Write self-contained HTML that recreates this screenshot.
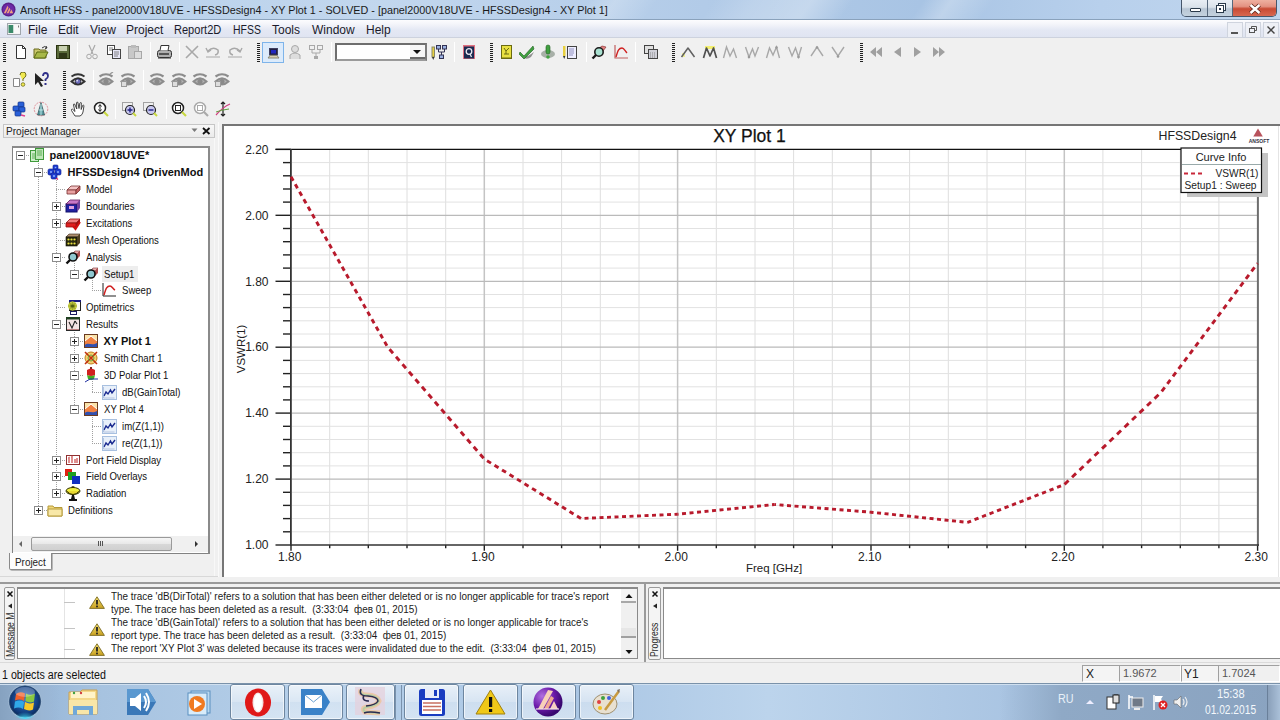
<!DOCTYPE html>
<html><head><meta charset="utf-8">
<style>
*{margin:0;padding:0;box-sizing:border-box}
html,body{width:1280px;height:720px;overflow:hidden;background:#f0f0f0;font-family:"Liberation Sans",sans-serif;color:#000;position:relative}
.a{position:absolute}
.grip{width:3px;height:19px;background:repeating-linear-gradient(#222 0 1px,transparent 1px 2px)}
.sep{width:1px;height:20px;background:#c8c8c8;border-right:1px solid #fff}
.tr{position:absolute;height:16px;line-height:16px;white-space:nowrap;font-size:11px;color:#111}
.tr.n{transform:scaleX(.87);transform-origin:0 50%}
.msg{position:absolute;font-size:11px;line-height:13px;color:#1a1a1a;white-space:nowrap;transform:scaleX(.9);transform-origin:0 50%}
.mi{position:absolute;top:21px;height:18px;line-height:18px;font-size:12px;color:#1b1b2b}
</style></head><body>
<!-- title bar -->
<div class="a" style="left:0;top:0;width:1280px;height:20px;background:linear-gradient(90deg,#b6cfea 0%,#c2d7ee 30%,#b2cbe8 55%,#a8c4e4 72%,#b8d0ec 86%,#c0d6ee 100%)"></div>
<div class="a" style="left:0;top:0;width:1280px;height:19px;overflow:hidden"><div class="a" style="left:0;top:-40px;width:1400px;height:100px;transform:skewX(-35deg);transform-origin:0 0;background:linear-gradient(90deg,rgba(255,255,255,0) 0,rgba(255,255,255,0) 44%,rgba(255,255,255,.22) 46%,rgba(255,255,255,0) 49%,rgba(255,255,255,0) 53%,rgba(255,255,255,.18) 56%,rgba(255,255,255,.3) 60%,rgba(255,255,255,0) 63%,rgba(255,255,255,0) 68%,rgba(255,255,255,.25) 70%,rgba(255,255,255,0) 73%,rgba(255,255,255,.0) 100%)"></div></div>
<div class="a" style="left:0;top:19px;width:1280px;height:1px;background:#8aa2bc"></div>
<svg class="a" style="left:1px;top:2px" width="15" height="15" viewBox="0 0 16 16"><circle cx="8" cy="8" r="7.5" fill="#5a1f8a"/><circle cx="8" cy="8" r="6" fill="#6c2aa6"/><path d="M3 12 L7 4 L8 6 L5 12Z M6 12 L9 6 L10 8 L8 12Z M9 12 L11 8 L13 12Z" fill="#f0a080"/></svg>
<div class="a" style="left:20px;top:2px;font-size:11px;line-height:16px;color:#1a1a1a;white-space:nowrap;transform:scaleX(.98);transform-origin:0 50%">Ansoft HFSS - panel2000V18UVE - HFSSDesign4 - XY Plot 1 - SOLVED - [panel2000V18UVE - HFSSDesign4 - XY Plot 1]</div>
<!-- caption buttons -->
<div class="a" style="left:1181px;top:0;width:96px;height:17px;border:1px solid #46566a;border-top:none;border-radius:0 0 5px 5px;overflow:hidden">
 <div class="a" style="left:0;top:0;width:26px;height:16px;background:linear-gradient(#e8eef4 0,#dae2ea 45%,#b8c6d4 55%,#c4d2de 100%);border-right:1px solid #56687c"></div>
 <div class="a" style="left:26px;top:0;width:25px;height:16px;background:linear-gradient(#e8eef4 0,#dae2ea 45%,#b8c6d4 55%,#c4d2de 100%);border-right:1px solid #56687c"></div>
 <div class="a" style="left:51px;top:0;width:45px;height:16px;background:linear-gradient(#eeb0a0 0,#e49282 40%,#c84a34 55%,#d86850 100%)"></div>
 <div class="a" style="left:8px;top:8px;width:11px;height:4px;background:#fff;border:1px solid #2a3a4a;border-radius:1px"></div>
 <svg class="a" style="left:33px;top:2px" width="12" height="12"><rect x="3.5" y="1.5" width="7" height="7" fill="#fff" stroke="#2a3a4a"/><rect x="1.5" y="3.5" width="7" height="7" fill="#fff" stroke="#2a3a4a"/><rect x="4" y="6" width="2" height="2" fill="#2a3a4a"/></svg>
 <svg class="a" style="left:66px;top:2.5px" width="14" height="12"><path d="M2.5 2 L11.5 10 M11.5 2 L2.5 10" stroke="#5a2418" stroke-width="4"/><path d="M2.5 2 L11.5 10 M11.5 2 L2.5 10" stroke="#fff" stroke-width="2.4"/></svg>
</div>
<!-- menu bar -->
<div class="a" style="left:0;top:20px;width:1280px;height:18px;background:linear-gradient(#fcfcfe 0,#f4f5fa 22%,#e4e8f4 55%,#dfe4f1 100%)"></div>
<div class="a" style="left:0;top:37px;width:1280px;height:1px;background:#cdd2de"></div>
<svg class="a" style="left:7px;top:22.5px" width="14" height="12" viewBox="0 0 14 12"><rect x=".5" y=".5" width="13" height="11" fill="#f4f4f4" stroke="#a0a6ac"/><rect x="1.5" y="2" width="5" height="8" fill="#3a8a6a"/><rect x="6.5" y="2" width="6" height="8" fill="#f8f8f8"/><path d="M11.5 2.5v2" stroke="#777"/></svg>
<div class="mi" style="left:28px">File</div>
<div class="mi" style="left:58px">Edit</div>
<div class="mi" style="left:90px">View</div>
<div class="mi" style="left:126px">Project</div>
<div class="mi" style="left:174px;transform:scaleX(.92);transform-origin:0 50%">Report2D</div>
<div class="mi" style="left:233px;transform:scaleX(.87);transform-origin:0 50%">HFSS</div>
<div class="mi" style="left:272px">Tools</div>
<div class="mi" style="left:312px">Window</div>
<div class="mi" style="left:366px">Help</div>
<!-- mdi buttons -->
<div class="a" style="left:1227px;top:22px;width:16px;height:16px;border:1px solid #cfd4de;background:#eef0f6"></div>
<div class="a" style="left:1231px;top:32px;width:7px;height:2px;background:#555"></div>
<div class="a" style="left:1245px;top:22px;width:16px;height:16px;border:1px solid #cfd4de;background:#eef0f6"></div>
<svg class="a" style="left:1248px;top:24px" width="10" height="10"><rect x="1.5" y="4.5" width="5" height="4" fill="none" stroke="#555"/><path d="M3.5 4.5v-2h5v4h-2" fill="none" stroke="#555"/></svg>
<div class="a" style="left:1263px;top:22px;width:16px;height:16px;border:1px solid #cfd4de;background:#eef0f6"></div>
<svg class="a" style="left:1266px;top:25px" width="10" height="10"><path d="M1.5 1.5 L8.5 8.5 M8.5 1.5 L1.5 8.5" stroke="#444" stroke-width="1.4"/></svg>

<!-- toolbars -->
<div class="a grip" style="left:3px;top:43px"></div>
<svg class="a" style="left:13px;top:44px" width="16" height="16" viewBox="0 0 16 16"><path d="M3.5 1.5h6l3 3v10h-9z" fill="#fff" stroke="#333"/><path d="M9.5 1.5v3h3" fill="none" stroke="#333"/></svg>
<svg class="a" style="left:33px;top:44px" width="16" height="16" viewBox="0 0 16 16"><path d="M1 5h5l1 1h6v8H1z" fill="#c9c76a" stroke="#6a6a20"/><path d="M1 14l3-6h11l-3 6z" fill="#a8b848" stroke="#5a6a10"/><path d="M9 4 Q12 1 14 4" stroke="#333" fill="none"/><path d="M13 2l1 2-2 .5" stroke="#333" fill="none"/></svg>
<svg class="a" style="left:55px;top:44px" width="16" height="16" viewBox="0 0 16 16"><rect x="1.5" y="1.5" width="13" height="13" fill="#5a6a3a" stroke="#2a3210"/><rect x="4" y="2" width="8" height="5" fill="#c8d0b0"/><rect x="4" y="9" width="8" height="5" fill="#303818"/></svg>
<div class="a sep" style="left:77px;top:42px"></div>
<svg class="a" style="left:84px;top:44px" width="16" height="16" viewBox="0 0 16 16"><path d="M5 1 L9 10 M11 1 L7 10" stroke="#a8a8a8" stroke-width="1.2" fill="none"/><circle cx="5" cy="12.5" r="2.3" fill="none" stroke="#a8a8a8"/><circle cx="11" cy="12.5" r="2.3" fill="none" stroke="#a8a8a8"/></svg>
<svg class="a" style="left:106px;top:44px" width="16" height="16" viewBox="0 0 16 16"><rect x="1.5" y="1.5" width="7" height="9" fill="#fff" stroke="#444"/><rect x="6.5" y="5.5" width="8" height="9" fill="#e8e8f8" stroke="#444"/><path d="M3 4h4M3 6h3M8 8h5M8 10h5M8 12h4" stroke="#666" stroke-width=".8"/></svg>
<svg class="a" style="left:127px;top:44px" width="16" height="16" viewBox="0 0 16 16"><rect x="1.5" y="2.5" width="10" height="12" fill="#c8c8c8" stroke="#a8a8a8"/><rect x="4" y="1" width="5" height="3" fill="#bbb"/><rect x="7.5" y="7.5" width="7" height="7" fill="#ddd" stroke="#a8a8a8"/></svg>
<div class="a sep" style="left:150px;top:42px"></div>
<svg class="a" style="left:156px;top:44px" width="16" height="16" viewBox="0 0 16 16"><rect x="1.5" y="6.5" width="14" height="7" rx="2" fill="#b0b0b0" stroke="#333"/><path d="M4 6.5 L5 1.5 H13 L12 6.5" fill="#fff" stroke="#333"/><rect x="3" y="9" width="10" height="2" fill="#555"/><path d="M2 14h13" stroke="#333"/></svg>
<div class="a sep" style="left:179px;top:42px"></div>
<svg class="a" style="left:184px;top:44px" width="16" height="16" viewBox="0 0 16 16"><path d="M2 2 L14 14 M14 2 L2 14" stroke="#a8a8a8" stroke-width="1.6"/></svg>
<svg class="a" style="left:205px;top:44px" width="16" height="16" viewBox="0 0 16 16"><path d="M3 7 Q8 2 13 6 Q14 10 10 11" stroke="#a8a8a8" stroke-width="1.5" fill="none"/><path d="M1 4 L3 8 L6 6" stroke="#a8a8a8" stroke-width="1.4" fill="none"/><path d="M1 13h14" stroke="#a8a8a8"/></svg>
<svg class="a" style="left:227px;top:44px" width="16" height="16" viewBox="0 0 16 16"><path d="M13 7 Q8 2 3 6 Q2 10 6 11" stroke="#a8a8a8" stroke-width="1.5" fill="none"/><path d="M15 4 L13 8 L10 6" stroke="#a8a8a8" stroke-width="1.4" fill="none"/><path d="M1 13h14" stroke="#a8a8a8"/></svg>
<div class="a grip" style="left:257px;top:43px"></div>
<div class="a" style="left:262px;top:42px;width:22px;height:21px;background:#dcebfb;border:1px solid #7eb4ea"></div>
<svg class="a" style="left:265px;top:45px" width="16" height="16" viewBox="0 0 16 16"><rect x="4.5" y="3.5" width="8" height="6.5" fill="#202040" stroke="#404060"/><rect x="6" y="5" width="5" height="3.5" fill="#2028c0"/><path d="M3 13 L5 10.5 H12 L14 13Z" fill="#d8d0b0" stroke="#887"/></svg>
<svg class="a" style="left:287px;top:44px" width="16" height="16" viewBox="0 0 16 16"><circle cx="8" cy="5" r="3.5" fill="#ddd" stroke="#a8a8a8"/><path d="M3 15 V11 Q8 7 13 11 V15" fill="#ddd" stroke="#a8a8a8"/></svg>
<svg class="a" style="left:308px;top:44px" width="16" height="16" viewBox="0 0 16 16"><rect x="1.5" y="1.5" width="5" height="4" fill="none" stroke="#a8a8a8"/><rect x="9.5" y="1.5" width="5" height="4" fill="none" stroke="#a8a8a8"/><path d="M4 6v3h8V6M8 9v3" stroke="#a8a8a8" fill="none"/><rect x="6" y="12" width="4" height="3" fill="#a8a8a8"/></svg>
<div class="a sep" style="left:331px;top:42px"></div>
<div class="a" style="left:335px;top:43px;width:92px;height:18px;background:#fff;border:2px solid #6e6e6e;border-right-color:#7a7a7a;border-bottom-color:#9a9a9a"></div>
<div class="a" style="left:410px;top:45px;width:15px;height:14px;background:#f6f6f6;border-bottom:2px solid #6a6a6a"></div>
<svg class="a" style="left:412px;top:49px" width="10" height="6"><path d="M1 1h8l-4 4z" fill="#111"/></svg>
<svg class="a" style="left:431px;top:44px" width="16" height="16" viewBox="0 0 16 16"><rect x="1" y="3" width="2.5" height="10" fill="#e8d040" stroke="#886"/><path d="M1 13l1.2 3 1.2-3" fill="#333"/><rect x="5.5" y="1.5" width="4" height="3.5" fill="#9ab0e0" stroke="#335"/><rect x="11.5" y="1.5" width="4" height="3.5" fill="#9ab0e0" stroke="#335"/><path d="M7.5 5v3h6V5M10.5 8v3" stroke="#335" fill="none"/><rect x="8.5" y="11" width="4" height="3.5" fill="#9ab0e0" stroke="#335"/></svg>
<div class="a sep" style="left:454px;top:42px"></div>
<svg class="a" style="left:461px;top:44px" width="16" height="16" viewBox="0 0 16 16"><rect x="2" y="1" width="12" height="14" fill="#e07080"/><rect x="3" y="2.5" width="10" height="12" fill="#1a2a50"/><circle cx="8" cy="7.5" r="2.8" fill="none" stroke="#e8e8f0" stroke-width="1.3"/><path d="M9 10 L10.5 13" stroke="#e8e8f0" stroke-width="1.2"/></svg>
<div class="a grip" style="left:490px;top:43px"></div>
<svg class="a" style="left:498px;top:44px" width="16" height="16" viewBox="0 0 16 16"><rect x="3.5" y="1.5" width="10" height="13" fill="#e8e040" stroke="#6a6a10"/><path d="M6 4 L8 7 L11 4 M8 7v3 M6 10h5" stroke="#6a6a10" fill="none"/><path d="M3 14h10" stroke="#6a6a10"/></svg>
<svg class="a" style="left:519px;top:44px" width="16" height="16" viewBox="0 0 16 16"><path d="M2 12 Q6 15 15 8 L12 13 Q7 17 2 12Z" fill="#909090"/><path d="M1 8 L5 12 L14 2 L15 5 L5 15 L0 10Z" fill="#40a040" stroke="#206020" stroke-width=".6"/></svg>
<svg class="a" style="left:540px;top:44px" width="16" height="16" viewBox="0 0 16 16"><ellipse cx="8" cy="10" rx="7" ry="4" fill="#a8b0a8"/><rect x="6" y="1" width="4" height="9" rx="2" fill="#40a040" stroke="#206020" stroke-width=".6"/><circle cx="8" cy="13" r="1.8" fill="#40a040"/></svg>
<svg class="a" style="left:562px;top:44px" width="16" height="16" viewBox="0 0 16 16"><rect x="5.5" y="2.5" width="9" height="12" fill="#eef" stroke="#444"/><path d="M7 5h5M7 7h5M7 9h5M7 11h4" stroke="#7a7ab0" stroke-width=".8"/><rect x="1" y="2" width="2.5" height="10" fill="#e8d040"/><path d="M1 12l1.2 3 1.2-3" fill="#333"/></svg>
<div class="a sep" style="left:586px;top:42px"></div>
<svg class="a" style="left:591px;top:44px" width="16" height="16" viewBox="0 0 16 16"><path d="M7 5 L11 2 L15 3 L12 7Z" fill="#e08080" stroke="#802020" stroke-width=".6"/><circle cx="8" cy="8" r="4.2" fill="#a8e0d0" stroke="#1a1a1a" stroke-width="1.6"/><path d="M5 11 L1.5 14.5" stroke="#1a1a1a" stroke-width="2.4"/></svg>
<svg class="a" style="left:613px;top:44px" width="16" height="16" viewBox="0 0 16 16"><path d="M2 1 V14 H15" stroke="#c06060" stroke-width="1.2" fill="none"/><path d="M3 13 C5 6 6 4 9 4 C11 4 12 7 14 9" stroke="#d02020" stroke-width="1.4" fill="none"/></svg>
<div class="a sep" style="left:635px;top:42px"></div>
<svg class="a" style="left:643px;top:44px" width="16" height="16" viewBox="0 0 16 16"><rect x="1.5" y="1.5" width="9" height="8" fill="#e0e0e0" stroke="#444"/><rect x="5.5" y="5.5" width="9" height="9" fill="#d0d0d8" stroke="#444"/><path d="M7 9h6M7 11h6M7 13h6" stroke="#777" stroke-width=".8" stroke-dasharray="1 1"/></svg>
<div class="a grip" style="left:672px;top:43px"></div>
<svg class="a" style="left:680px;top:44px" width="16" height="16" viewBox="0 0 16 16"><path d="M2 9h3v4H2z" fill="#f0f080" opacity=".8"/><path d="M1.5 13 L8 4 L14.5 13" stroke="#606060" stroke-width="1.5" fill="none" stroke-linejoin="round"/></svg>
<svg class="a" style="left:702px;top:44px" width="16" height="16" viewBox="0 0 16 16"><path d="M3 2h10v3H3z" fill="#f4f070"/><path d="M1.5 14 L4.5 4 L8 12 L11.5 4 L14.5 14" stroke="#505050" stroke-width="1.7" fill="none" stroke-linejoin="round"/></svg>
<svg class="a" style="left:722px;top:44px" width="16" height="16" viewBox="0 0 16 16"><path d="M1.5 14 L4.5 3 L8 12 L11.5 5 L14.5 14" stroke="#a8a8a8" stroke-width="1.4" fill="none"/></svg>
<svg class="a" style="left:744px;top:44px" width="16" height="16" viewBox="0 0 16 16"><path d="M1.5 3 L5 13 L8.5 5 L11 12 L14.5 3" stroke="#a8a8a8" stroke-width="1.4" fill="none"/><circle cx="5" cy="13" r="1.3" fill="#999"/></svg>
<svg class="a" style="left:765px;top:44px" width="16" height="16" viewBox="0 0 16 16"><path d="M1.5 14 L4.5 4 L8 11 L11.5 3 L14.5 14" stroke="#a8a8a8" stroke-width="1.4" fill="none"/><circle cx="11.5" cy="3.5" r="1.3" fill="#999"/></svg>
<svg class="a" style="left:787px;top:44px" width="16" height="16" viewBox="0 0 16 16"><path d="M1.5 3 L5 12 L8.5 4 L11.5 13 L14.5 3" stroke="#a8a8a8" stroke-width="1.4" fill="none"/><circle cx="11.5" cy="13" r="1.3" fill="#999"/></svg>
<svg class="a" style="left:809px;top:44px" width="16" height="16" viewBox="0 0 16 16"><path d="M2 12 L8 3 L14 12" stroke="#a8a8a8" stroke-width="1.4" fill="none"/><circle cx="8" cy="3.5" r="1.3" fill="#999"/></svg>
<svg class="a" style="left:830px;top:44px" width="16" height="16" viewBox="0 0 16 16"><path d="M2 3 L8 12 L14 3" stroke="#a8a8a8" stroke-width="1.4" fill="none"/><circle cx="8" cy="12.5" r="1.3" fill="#999"/></svg>
<div class="a grip" style="left:860px;top:43px"></div>
<svg class="a" style="left:868px;top:44px" width="16" height="16" viewBox="0 0 16 16"><path d="M8 3 L2 8 L8 13Z M14 3 L8 8 L14 13Z" fill="#a0a0a0"/></svg>
<svg class="a" style="left:889px;top:44px" width="16" height="16" viewBox="0 0 16 16"><path d="M12 3 L5 8 L12 13Z" fill="#a0a0a0"/></svg>
<svg class="a" style="left:910px;top:44px" width="16" height="16" viewBox="0 0 16 16"><path d="M4 3 L11 8 L4 13Z" fill="#a0a0a0"/></svg>
<svg class="a" style="left:931px;top:44px" width="16" height="16" viewBox="0 0 16 16"><path d="M2 3 L8 8 L2 13Z M8 3 L14 8 L8 13Z" fill="#a0a0a0"/></svg>
<div class="a grip" style="left:3px;top:71px"></div>
<svg class="a" style="left:11px;top:72px" width="16" height="16" viewBox="0 0 16 16"><path d="M2.5 6.5h6v8h-6z" fill="#fff" stroke="#888"/><path d="M9 3 Q9 0 12 0 Q15 0 15 3 Q15 5 12 7 V9" stroke="#707020" stroke-width="1" fill="#f0e850"/><circle cx="12" cy="12.5" r="1.8" fill="#f0e850" stroke="#707020" stroke-width=".8"/></svg>
<svg class="a" style="left:33px;top:72px" width="16" height="16" viewBox="0 0 16 16"><path d="M2 1 L2 13 L5 10 L8 15 L10 14 L7 9 L11 9Z" fill="#222"/><path d="M10 4 Q10 1 12.5 1 Q15 1 15 4 Q15 6 12.5 7.5 V9" stroke="#30308a" stroke-width="1.8" fill="none"/><rect x="11.5" y="11" width="2" height="2" fill="#30308a"/></svg>
<div class="a grip" style="left:63px;top:71px"></div>
<svg class="a" style="left:70px;top:72px" width="16" height="16" viewBox="0 0 16 16"><path d="M1.5 9.5 Q8 3 14.5 9.5 Q8 15.5 1.5 9.5Z" fill="#e8e8f0" stroke="#333" stroke-width="2"/><circle cx="8" cy="9.5" r="2.8" fill="#6a6ab8" stroke="#222" stroke-width=".8"/><circle cx="7.2" cy="8.7" r=".9" fill="#dde"/><path d="M1.5 4.5 Q8 0 14.5 4.5" stroke="#333" fill="none" stroke-width="1.8"/></svg>
<div class="a sep" style="left:93px;top:70px"></div>
<svg class="a" style="left:98px;top:72px" width="16" height="16" viewBox="0 0 16 16"><path d="M1.5 9.5 Q8 3 14.5 9.5 Q8 15.5 1.5 9.5Z" fill="#b4b4b4" stroke="#8c8c8c" stroke-width="2"/><circle cx="8" cy="9.5" r="2.6" fill="#8a8a8a"/><path d="M1.5 4.5 Q8 0 14.5 4.5" stroke="#8c8c8c" fill="none" stroke-width="2.2"/><path d="M12 2 L15 0" stroke="#999" stroke-width="1.4"/></svg>
<svg class="a" style="left:120px;top:72px" width="16" height="16" viewBox="0 0 16 16"><path d="M1.5 9.5 Q8 3 14.5 9.5 Q8 15.5 1.5 9.5Z" fill="#b4b4b4" stroke="#8c8c8c" stroke-width="2"/><circle cx="8" cy="9.5" r="2.6" fill="#8a8a8a"/><path d="M1.5 4.5 Q8 0 14.5 4.5" stroke="#8c8c8c" fill="none" stroke-width="2.2"/><rect x="1.5" y="9.5" width="5" height="5" fill="#ddd" stroke="#999"/></svg>
<div class="a sep" style="left:143px;top:70px"></div>
<svg class="a" style="left:149px;top:72px" width="16" height="16" viewBox="0 0 16 16"><path d="M1.5 9.5 Q8 3 14.5 9.5 Q8 15.5 1.5 9.5Z" fill="#b4b4b4" stroke="#8c8c8c" stroke-width="2"/><circle cx="8" cy="9.5" r="2.6" fill="#8a8a8a"/><path d="M1.5 4.5 Q8 0 14.5 4.5" stroke="#8c8c8c" fill="none" stroke-width="2.2"/></svg>
<svg class="a" style="left:171px;top:72px" width="16" height="16" viewBox="0 0 16 16"><path d="M1.5 9.5 Q8 3 14.5 9.5 Q8 15.5 1.5 9.5Z" fill="#b4b4b4" stroke="#8c8c8c" stroke-width="2"/><circle cx="8" cy="9.5" r="2.6" fill="#8a8a8a"/><path d="M1.5 4.5 Q8 0 14.5 4.5" stroke="#8c8c8c" fill="none" stroke-width="2.2"/><rect x="1.5" y="9.5" width="5" height="5" fill="#ddd" stroke="#999"/></svg>
<svg class="a" style="left:192px;top:72px" width="16" height="16" viewBox="0 0 16 16"><path d="M1.5 9.5 Q8 3 14.5 9.5 Q8 15.5 1.5 9.5Z" fill="#b4b4b4" stroke="#8c8c8c" stroke-width="2"/><circle cx="8" cy="9.5" r="2.6" fill="#8a8a8a"/><path d="M1.5 4.5 Q8 0 14.5 4.5" stroke="#8c8c8c" fill="none" stroke-width="2.2"/></svg>
<svg class="a" style="left:214px;top:72px" width="16" height="16" viewBox="0 0 16 16"><path d="M1.5 9.5 Q8 3 14.5 9.5 Q8 15.5 1.5 9.5Z" fill="#b4b4b4" stroke="#8c8c8c" stroke-width="2"/><circle cx="8" cy="9.5" r="2.6" fill="#8a8a8a"/><path d="M1.5 4.5 Q8 0 14.5 4.5" stroke="#8c8c8c" fill="none" stroke-width="2.2"/><rect x="1.5" y="9.5" width="5" height="5" fill="#ddd" stroke="#999"/></svg>
<div class="a grip" style="left:3px;top:99px"></div>
<svg class="a" style="left:11px;top:101px" width="16" height="16" viewBox="0 0 16 16"><g fill="#2a60d8" stroke="#10308a" stroke-width=".7"><rect x="7" y="1" width="6" height="5" rx="1"/><rect x="2" y="5" width="6" height="5" rx="1"/><rect x="8" y="6" width="6" height="5" rx="1"/><rect x="4" y="10" width="6" height="5" rx="1"/></g><path d="M10 14l4 1" stroke="#e04090" stroke-width="1.4"/></svg>
<svg class="a" style="left:33px;top:101px" width="16" height="16" viewBox="0 0 16 16"><circle cx="8" cy="8" r="6.8" fill="none" stroke="#e09098" stroke-dasharray="2 1"/><path d="M8 1.5 L4.5 14 H11.5Z" fill="#5a9aa0" stroke="#2a4a50" stroke-width=".7"/><path d="M8 3v11 M6 9h4" stroke="#c8f0f0" stroke-width=".9"/></svg>
<div class="a grip" style="left:63px;top:99px"></div>
<svg class="a" style="left:70px;top:101px" width="16" height="16" viewBox="0 0 16 16"><path d="M5 15 L1.5 9.5 Q1 8 2.5 8.2 L5 10.5 L3.5 4 Q3.3 2.8 4.6 3 L6.8 8 L6.5 2 Q6.6 .8 7.8 1.2 L9 7.5 L9.8 2.2 Q10.3 1.2 11.3 1.8 L11.2 8.5 L12.6 4.5 Q13.4 3.8 14 4.6 L13 11 Q12.5 14 10 15Z" fill="#fff" stroke="#333" stroke-width=".9"/></svg>
<svg class="a" style="left:93px;top:101px" width="16" height="16" viewBox="0 0 16 16"><circle cx="7" cy="7" r="5.5" fill="#fff" stroke="#222" stroke-width="1.5"/><path d="M7 4v6 M5.5 5.5 L7 3.5 L8.5 5.5 M5.5 8.5 L7 10.5 L8.5 8.5" stroke="#222" fill="none"/><path d="M11 11 L15 15" stroke="#c8d840" stroke-width="2.2"/></svg>
<div class="a sep" style="left:115px;top:99px"></div>
<svg class="a" style="left:121px;top:101px" width="16" height="16" viewBox="0 0 16 16"><rect x="1.5" y="1.5" width="10" height="8" fill="none" stroke="#555" stroke-dasharray="1 1"/><circle cx="9" cy="9" r="4.5" fill="#c8c8f0" stroke="#222" stroke-width="1.2"/><path d="M6.5 9h5M9 6.5v5" stroke="#202080" stroke-width="1.4"/><path d="M12 12 L15 15" stroke="#c8d840" stroke-width="2"/></svg>
<svg class="a" style="left:142px;top:101px" width="16" height="16" viewBox="0 0 16 16"><rect x="1.5" y="1.5" width="10" height="8" fill="none" stroke="#555" stroke-dasharray="1 1"/><circle cx="9" cy="9" r="4.5" fill="#c8c8f0" stroke="#222" stroke-width="1.2"/><path d="M6.5 9h5" stroke="#202080" stroke-width="1.4"/><path d="M12 12 L15 15" stroke="#c8d840" stroke-width="2"/></svg>
<div class="a sep" style="left:166px;top:99px"></div>
<svg class="a" style="left:171px;top:101px" width="16" height="16" viewBox="0 0 16 16"><circle cx="7" cy="7" r="5.5" fill="#fff" stroke="#222" stroke-width="1.5"/><rect x="4.5" y="4.5" width="5" height="5" fill="none" stroke="#222"/><path d="M11 11 L15 15" stroke="#c8d840" stroke-width="2.2"/></svg>
<svg class="a" style="left:193px;top:101px" width="16" height="16" viewBox="0 0 16 16"><circle cx="7" cy="7" r="5.5" fill="#fff" stroke="#aaa" stroke-width="1.5"/><rect x="4.5" y="4.5" width="5" height="5" fill="none" stroke="#aaa"/><path d="M11 11 L15 15" stroke="#aaa" stroke-width="2.2"/></svg>
<svg class="a" style="left:215px;top:101px" width="16" height="16" viewBox="0 0 16 16"><path d="M8 1v14 M6 3 L8 1 L10 3 M6 13 L8 15 L10 13" stroke="#222" stroke-width="1.2" fill="none"/><path d="M1 14 Q8 6 15 3" stroke="#d04080" stroke-width="1.2" fill="none"/><path d="M1 11 Q6 9 14 8" stroke="#60a040" stroke-width="1" fill="none"/></svg>

<!-- project manager -->
<div class="a" style="left:3px;top:124px;width:212px;height:14px;background:linear-gradient(#f7f7f7,#ebebeb);border:1px solid #c6c6c6"></div>
<div class="a" style="left:6px;top:124px;font-size:11px;line-height:14px;color:#222;transform:scaleX(.92);transform-origin:0 50%">Project Manager</div>
<svg class="a" style="left:191px;top:128px" width="8" height="5"><path d="M.5 .5h6l-3 3.5z" fill="#7a7a7a"/></svg>
<svg class="a" style="left:202px;top:127px" width="9" height="8"><path d="M1 1 L7.5 7 M7.5 1 L1 7" stroke="#111" stroke-width="1.8"/></svg>
<div class="a" style="left:214px;top:138px;width:1px;height:440px;background:#f8f8f8"></div>
<div class="a" style="left:12px;top:146px;width:198px;height:408px;background:#fff;border:1px solid #828282;border-top:2px solid #8a8a8a;border-right:2px solid #8a8a8a"></div>
<svg class="a" style="left:0;top:0" width="215" height="560"><g stroke="#a0a0a0" stroke-width="1" stroke-dasharray="1 1"><line x1="20.5" y1="159" x2="20.5" y2="161"/><line x1="38.5" y1="161" x2="38.5" y2="510"/><line x1="56.5" y1="178" x2="56.5" y2="493"/><line x1="74.5" y1="263" x2="74.5" y2="274"/><line x1="92.5" y1="280" x2="92.5" y2="290"/><line x1="74.5" y1="330" x2="74.5" y2="409"/><line x1="92.5" y1="381" x2="92.5" y2="392"/><line x1="92.5" y1="415" x2="92.5" y2="443"/><line x1="20" y1="155.5" x2="29" y2="155.5"/><line x1="38" y1="172.5" x2="47" y2="172.5"/><line x1="56" y1="189.5" x2="65" y2="189.5"/><line x1="56" y1="206.5" x2="65" y2="206.5"/><line x1="56" y1="223.5" x2="65" y2="223.5"/><line x1="56" y1="240.5" x2="65" y2="240.5"/><line x1="56" y1="257.5" x2="65" y2="257.5"/><line x1="74" y1="274.5" x2="83" y2="274.5"/><line x1="92" y1="290.5" x2="101" y2="290.5"/><line x1="56" y1="307.5" x2="65" y2="307.5"/><line x1="56" y1="324.5" x2="65" y2="324.5"/><line x1="74" y1="341.5" x2="83" y2="341.5"/><line x1="74" y1="358.5" x2="83" y2="358.5"/><line x1="74" y1="375.5" x2="83" y2="375.5"/><line x1="92" y1="392.5" x2="101" y2="392.5"/><line x1="74" y1="409.5" x2="83" y2="409.5"/><line x1="92" y1="426.5" x2="101" y2="426.5"/><line x1="92" y1="443.5" x2="101" y2="443.5"/><line x1="56" y1="460.5" x2="65" y2="460.5"/><line x1="56" y1="476.5" x2="65" y2="476.5"/><line x1="56" y1="493.5" x2="65" y2="493.5"/><line x1="38" y1="510.5" x2="47" y2="510.5"/></g>
<rect x="16.5" y="151.5" width="8" height="8" fill="#fff" stroke="#8c8c8c"/>
<path d="M18 155.5h5" stroke="#222"/>
<rect x="34.5" y="168.5" width="8" height="8" fill="#fff" stroke="#8c8c8c"/>
<path d="M36 172.5h5" stroke="#222"/>
<rect x="52.5" y="202.5" width="8" height="8" fill="#fff" stroke="#8c8c8c"/>
<path d="M54 206.5h5" stroke="#222"/>
<path d="M56.5 204v5" stroke="#222"/>
<rect x="52.5" y="219.5" width="8" height="8" fill="#fff" stroke="#8c8c8c"/>
<path d="M54 223.5h5" stroke="#222"/>
<path d="M56.5 221v5" stroke="#222"/>
<rect x="52.5" y="253.5" width="8" height="8" fill="#fff" stroke="#8c8c8c"/>
<path d="M54 257.5h5" stroke="#222"/>
<rect x="70.5" y="270.5" width="8" height="8" fill="#fff" stroke="#8c8c8c"/>
<path d="M72 274.5h5" stroke="#222"/>
<rect x="52.5" y="320.5" width="8" height="8" fill="#fff" stroke="#8c8c8c"/>
<path d="M54 324.5h5" stroke="#222"/>
<rect x="70.5" y="337.5" width="8" height="8" fill="#fff" stroke="#8c8c8c"/>
<path d="M72 341.5h5" stroke="#222"/>
<path d="M74.5 339v5" stroke="#222"/>
<rect x="70.5" y="354.5" width="8" height="8" fill="#fff" stroke="#8c8c8c"/>
<path d="M72 358.5h5" stroke="#222"/>
<path d="M74.5 356v5" stroke="#222"/>
<rect x="70.5" y="371.5" width="8" height="8" fill="#fff" stroke="#8c8c8c"/>
<path d="M72 375.5h5" stroke="#222"/>
<rect x="70.5" y="405.5" width="8" height="8" fill="#fff" stroke="#8c8c8c"/>
<path d="M72 409.5h5" stroke="#222"/>
<rect x="52.5" y="456.5" width="8" height="8" fill="#fff" stroke="#8c8c8c"/>
<path d="M54 460.5h5" stroke="#222"/>
<path d="M56.5 458v5" stroke="#222"/>
<rect x="52.5" y="472.5" width="8" height="8" fill="#fff" stroke="#8c8c8c"/>
<path d="M54 476.5h5" stroke="#222"/>
<path d="M56.5 474v5" stroke="#222"/>
<rect x="52.5" y="489.5" width="8" height="8" fill="#fff" stroke="#8c8c8c"/>
<path d="M54 493.5h5" stroke="#222"/>
<path d="M56.5 491v5" stroke="#222"/>
<rect x="34.5" y="506.5" width="8" height="8" fill="#fff" stroke="#8c8c8c"/>
<path d="M36 510.5h5" stroke="#222"/>
<path d="M38.5 508v5" stroke="#222"/>
</svg>
<svg class="a" style="left:29px;top:147px" width="16" height="16" viewBox="0 0 16 16"><rect x="1.5" y="3.5" width="8" height="11" fill="#cfeecb" stroke="#3f9a3a"/><rect x="6.5" y="1.5" width="8" height="11" fill="#bfe6b8" stroke="#3f9a3a"/><path d="M8 4h5M8 6h5M8 8h5M3 7h4M3 9h4M3 11h4" stroke="#5fae56" stroke-width="1"/></svg>
<div class="tr" style="left:49.5px;top:147px;font-weight:bold">panel2000V18UVE*</div>
<svg class="a" style="left:47px;top:164px" width="16" height="16" viewBox="0 0 16 16"><g fill="#1f3fd0" stroke="#0a1a8a" stroke-width=".6"><rect x="6" y="1" width="5" height="5" rx="1"/><rect x="1" y="5" width="6" height="6" rx="1.5"/><rect x="8" y="5" width="6" height="6" rx="1.5"/><rect x="4" y="9" width="6" height="6" rx="1.5"/></g><g fill="#8fb0ff"><circle cx="4" cy="8" r="1"/><circle cx="11" cy="8" r="1"/><circle cx="7" cy="12" r="1"/><circle cx="8.5" cy="3.5" r=".8"/></g><path d="M9 14l2 1.5" stroke="#d02060" stroke-width="1.2"/></svg>
<div class="tr" style="left:67.5px;top:164px;font-weight:bold">HFSSDesign4 (DrivenMod</div>
<svg class="a" style="left:65px;top:181px" width="16" height="16" viewBox="0 0 16 16"><path d="M2 9 L6 5 L15 5 L11 9 Z" fill="#f3c3c3" stroke="#7a3030" stroke-width=".8"/><path d="M2 9 L11 9 L11 13 L2 13 Z" fill="#e8a0a0" stroke="#7a3030" stroke-width=".8"/><path d="M11 9 L15 5 L15 9 L11 13 Z" fill="#c06060" stroke="#7a3030" stroke-width=".8"/></svg>
<div class="tr n" style="left:85.5px;top:181px">Model</div>
<svg class="a" style="left:65px;top:198px" width="16" height="16" viewBox="0 0 16 16"><rect x="1" y="6" width="11" height="8" fill="#2020a0" stroke="#10106a"/><path d="M1 6 L5 2 L15 2 L12 6Z" fill="#c878c8" stroke="#602060" stroke-width=".8"/><path d="M12 6 L15 2 L15 10 L12 14Z" fill="#7040a0"/><rect x="4" y="8" width="5" height="3" fill="#e0a0e0"/></svg>
<div class="tr n" style="left:85.5px;top:198px">Boundaries</div>
<svg class="a" style="left:65px;top:215px" width="16" height="16" viewBox="0 0 16 16"><path d="M1 8 L5 4 L15 4 L11 8 Z" fill="#f08080" stroke="#901010" stroke-width=".8"/><path d="M1 8 L11 8 L11 12 L1 12 Z" fill="#e02020" stroke="#901010" stroke-width=".8"/><path d="M11 8 L15 4 L15 8 L11 12Z" fill="#a01010"/><path d="M8 11 L10.5 14 L15 7" stroke="#d01010" stroke-width="2" fill="none"/></svg>
<div class="tr n" style="left:85.5px;top:215px">Excitations</div>
<svg class="a" style="left:65px;top:232px" width="16" height="16" viewBox="0 0 16 16"><path d="M1 5 L4 2 L15 2 L12 5Z" fill="#b09070" stroke="#302010" stroke-width=".6"/><rect x="1" y="5" width="11" height="9" fill="#2a2a10" stroke="#101000" stroke-width=".6"/><path d="M12 5 L15 2 L15 11 L12 14Z" fill="#504020"/><g fill="#e8e040"><circle cx="3.5" cy="7.5" r="1.1"/><circle cx="6.5" cy="7.5" r="1.1"/><circle cx="9.5" cy="7.5" r="1.1"/><circle cx="3.5" cy="11.5" r="1.1"/><circle cx="6.5" cy="11.5" r="1.1"/><circle cx="9.5" cy="11.5" r="1.1"/></g></svg>
<div class="tr n" style="left:85.5px;top:232px">Mesh Operations</div>
<svg class="a" style="left:65px;top:249px" width="16" height="16" viewBox="0 0 16 16"><path d="M7 5 L10 2 L15 2 L12 5Z" fill="#f0b0b0" stroke="#703030" stroke-width=".6"/><path d="M12 5 L15 2 L15 7 L12 10Z" fill="#b05050"/><circle cx="8" cy="8" r="4" fill="#90c8d0" stroke="#101010" stroke-width="1.6"/><path d="M5 11 L1.5 14.5" stroke="#101010" stroke-width="2.4"/></svg>
<div class="tr n" style="left:85.5px;top:249px">Analysis</div>
<svg class="a" style="left:83px;top:266px" width="16" height="16" viewBox="0 0 16 16"><path d="M7 5 L10 2 L15 2 L12 5Z" fill="#f0b0b0" stroke="#703030" stroke-width=".6"/><path d="M12 5 L15 2 L15 7 L12 10Z" fill="#b05050"/><circle cx="8" cy="8" r="4" fill="#90c8d0" stroke="#101010" stroke-width="1.6"/><path d="M5 11 L1.5 14.5" stroke="#101010" stroke-width="2.4"/></svg>
<div class="a" style="left:101.5px;top:266px;width:36px;height:16px;background:#eeeeee"></div>
<div class="tr n" style="left:103.5px;top:266px">Setup1</div>
<svg class="a" style="left:101px;top:282px" width="16" height="16" viewBox="0 0 16 16"><path d="M2 1 V14 H15" stroke="#202020" stroke-width="1" fill="none"/><path d="M3 13 C5 6 6 4 9 4 C11 4 12 7 14 8" stroke="#d02020" stroke-width="1.5" fill="none"/></svg>
<div class="tr n" style="left:121.5px;top:282px">Sweep</div>
<svg class="a" style="left:65px;top:299px" width="16" height="16" viewBox="0 0 16 16"><rect x="4.5" y="1.5" width="11" height="10" fill="#fbfbf0" stroke="#222"/><rect x="4" y="1" width="12" height="2" fill="#1a1a80"/><circle cx="7.5" cy="7" r="4.5" fill="#c8d040"/><circle cx="7.5" cy="7" r="2" fill="#f0f060" stroke="#606010"/><path d="M3 7h9M7.5 2.5v9M4.5 4l6 6M10.5 4l-6 6" stroke="#a0a830" stroke-width="1.2"/><circle cx="7.5" cy="7" r="1.6" fill="#506010"/><rect x="5.5" y="12.5" width="6" height="3" fill="#fff" stroke="#1a1a60"/></svg>
<div class="tr n" style="left:85.5px;top:299px">Optimetrics</div>
<svg class="a" style="left:65px;top:316px" width="16" height="16" viewBox="0 0 16 16"><rect x="1.5" y="1.5" width="13" height="13" fill="#f4e4e4" stroke="#2a2a2a"/><rect x="1" y="1" width="14" height="2.5" fill="#204020"/><path d="M4 6 L7 12 L10 5 M10 5 L12 8" stroke="#222" stroke-width="1.1" fill="none"/><path d="M2 13.5h12" stroke="#c08080"/></svg>
<div class="tr n" style="left:85.5px;top:316px">Results</div>
<svg class="a" style="left:83px;top:333px" width="16" height="16" viewBox="0 0 16 16"><rect x="1.5" y="1.5" width="13" height="13" fill="#fbe3a8" stroke="#6a3a20"/><path d="M2 8 L8 3 L14 8 V14 H2Z" fill="#f08040"/><path d="M2 12 C5 9 9 13 14 10 V14 H2Z" fill="#3050b0"/><path d="M2 8 L8 3 L14 8" stroke="#fff" fill="none"/></svg>
<div class="tr" style="left:103.5px;top:333px;font-weight:bold">XY Plot 1</div>
<svg class="a" style="left:83px;top:350px" width="16" height="16" viewBox="0 0 16 16"><circle cx="8" cy="8" r="6" fill="#f6d070" stroke="#c08020"/><path d="M2 2 L14 14 M14 2 L2 14" stroke="#c03010" stroke-width="1.6"/><circle cx="8" cy="8" r="3" fill="none" stroke="#70a040"/></svg>
<div class="tr n" style="left:103.5px;top:350px">Smith Chart 1</div>
<svg class="a" style="left:83px;top:367px" width="16" height="16" viewBox="0 0 16 16"><path d="M4 3 Q8 0 12 3 L12 8 Q8 10 4 8Z" fill="#d02020"/><path d="M4 8 Q8 10 12 8 L11 12 Q8 14 5 12Z" fill="#40b020"/><path d="M2 15 L7 12 M7 12 L15 12" stroke="#2030a0" stroke-width="1"/><rect x="7" y="0" width="2" height="2" fill="#802020"/></svg>
<div class="tr n" style="left:103.5px;top:367px">3D Polar Plot 1</div>
<svg class="a" style="left:101px;top:384px" width="16" height="16" viewBox="0 0 16 16"><rect x="1.5" y="1.5" width="14" height="14" fill="#e8f0fa" stroke="#a8c0e0"/><path d="M3 12 L5 8 L7 10 L9.5 6 L11 9 L14 5" stroke="#1a2a90" stroke-width="1.4" fill="none"/><path d="M2.5 3v11h11" stroke="#90a8d0" stroke-width=".6" fill="none"/></svg>
<div class="tr n" style="left:121.5px;top:384px">dB(GainTotal)</div>
<svg class="a" style="left:83px;top:401px" width="16" height="16" viewBox="0 0 16 16"><rect x="1.5" y="1.5" width="13" height="13" fill="#fbe3a8" stroke="#6a3a20"/><path d="M2 8 L8 3 L14 8 V14 H2Z" fill="#f08040"/><path d="M2 12 C5 9 9 13 14 10 V14 H2Z" fill="#3050b0"/><path d="M2 8 L8 3 L14 8" stroke="#fff" fill="none"/></svg>
<div class="tr n" style="left:103.5px;top:401px">XY Plot 4</div>
<svg class="a" style="left:101px;top:418px" width="16" height="16" viewBox="0 0 16 16"><rect x="1.5" y="1.5" width="14" height="14" fill="#e8f0fa" stroke="#a8c0e0"/><path d="M3 12 L5 8 L7 10 L9.5 6 L11 9 L14 5" stroke="#1a2a90" stroke-width="1.4" fill="none"/><path d="M2.5 3v11h11" stroke="#90a8d0" stroke-width=".6" fill="none"/></svg>
<div class="tr n" style="left:121.5px;top:418px">im(Z(1,1))</div>
<svg class="a" style="left:101px;top:435px" width="16" height="16" viewBox="0 0 16 16"><rect x="1.5" y="1.5" width="14" height="14" fill="#e8f0fa" stroke="#a8c0e0"/><path d="M3 12 L5 8 L7 10 L9.5 6 L11 9 L14 5" stroke="#1a2a90" stroke-width="1.4" fill="none"/><path d="M2.5 3v11h11" stroke="#90a8d0" stroke-width=".6" fill="none"/></svg>
<div class="tr n" style="left:121.5px;top:435px">re(Z(1,1))</div>
<svg class="a" style="left:65px;top:452px" width="16" height="16" viewBox="0 0 16 16"><rect x="1.5" y="3.5" width="13" height="9" fill="#fff" stroke="#903030"/><path d="M4 11 V6 M7 11 V5 M10 11 V7 M12 11 V6" stroke="#c02020" stroke-width="1"/><path d="M3 6 L5 5 M6 5 L8 4" stroke="#c04040" stroke-width=".8"/></svg>
<div class="tr n" style="left:85.5px;top:452px">Port Field Display</div>
<svg class="a" style="left:65px;top:468px" width="16" height="16" viewBox="0 0 16 16"><rect x="0" y="1" width="7" height="7" fill="#e02010"/><rect x="3" y="4" width="8" height="8" fill="#20a020"/><rect x="7" y="8" width="8" height="8" fill="#1030c0"/></svg>
<div class="tr n" style="left:85.5px;top:468px">Field Overlays</div>
<svg class="a" style="left:65px;top:485px" width="16" height="16" viewBox="0 0 16 16"><ellipse cx="8" cy="6" rx="7" ry="3.5" fill="#f0f040" stroke="#303000" stroke-width="1"/><path d="M1.5 6 Q8 13 14.5 6" fill="#e8d830" stroke="#303000"/><path d="M7 10 L6 14 H10 L9 10Z" fill="#101010"/><rect x="4" y="14" width="8" height="2" fill="#101010"/><path d="M7 1 L8 3 L9 1" stroke="#303000" fill="none"/></svg>
<div class="tr n" style="left:85.5px;top:485px">Radiation</div>
<svg class="a" style="left:47px;top:502px" width="16" height="16" viewBox="0 0 16 16"><path d="M1 4 H6 L7 5.5 H15 V14 H1Z" fill="#f1d77a" stroke="#b59a3a"/><path d="M1 7 H15 V14 H1Z" fill="#f8e8a8" stroke="#b59a3a"/></svg>
<div class="tr n" style="left:67.5px;top:502px">Definitions</div>
<!-- h scrollbar -->
<div class="a" style="left:13px;top:536px;width:195px;height:16px;background:#f0f0f0"></div>
<svg class="a" style="left:17px;top:540px" width="8" height="8"><path d="M5 1 L2 4 L5 7Z" fill="#666"/></svg>
<svg class="a" style="left:192px;top:540px" width="8" height="8"><path d="M3 1 L6 4 L3 7Z" fill="#333"/></svg>
<div class="a" style="left:31px;top:537px;width:141px;height:14px;border:1px solid #9a9a9a;border-radius:2px;background:linear-gradient(#f6f6f6 0,#e8e8e8 50%,#d8d8d8 51%,#d0d0d0 100%)"></div>
<div class="a" style="left:98px;top:541px;width:6px;height:5px;background:repeating-linear-gradient(90deg,#555 0 1px,transparent 1px 2px)"></div>
<!-- project tab -->
<div class="a" style="left:9px;top:553px;width:43px;height:17px;background:#fcfcfc;border:1px solid #8a8a8a;border-top:none;border-radius:0 0 2px 2px;box-shadow:1px 1px 0 #b8b8b8"></div>
<div class="a" style="left:15px;top:555px;font-size:11px;line-height:14px;color:#222;transform:scaleX(.9);transform-origin:0 50%">Project</div>
<div class="a" style="left:0;top:576px;width:222px;height:1px;background:#d8d8d8"></div>

<!-- plot window -->
<div class="a" style="left:218px;top:122px;width:4px;height:456px;background:#f0f0f0;border-left:1px solid #fafafa"></div>
<div class="a" style="left:222px;top:124px;width:1058px;height:453px;background:#fff;border-left:2px solid #767676;border-top:2px solid #767676"></div>
<div class="a" style="left:1278px;top:126px;width:1px;height:451px;background:#e4e4e4"></div>
<svg class="a" style="left:0;top:0" width="1280" height="600" font-family="Liberation Sans">
<line x1="329.7" y1="150" x2="329.7" y2="545" stroke="#dedede" stroke-width="1"/>
<line x1="368.3" y1="150" x2="368.3" y2="545" stroke="#dedede" stroke-width="1"/>
<line x1="407.0" y1="150" x2="407.0" y2="545" stroke="#dedede" stroke-width="1"/>
<line x1="445.7" y1="150" x2="445.7" y2="545" stroke="#dedede" stroke-width="1"/>
<line x1="523.0" y1="150" x2="523.0" y2="545" stroke="#dedede" stroke-width="1"/>
<line x1="561.6" y1="150" x2="561.6" y2="545" stroke="#dedede" stroke-width="1"/>
<line x1="600.3" y1="150" x2="600.3" y2="545" stroke="#dedede" stroke-width="1"/>
<line x1="639.0" y1="150" x2="639.0" y2="545" stroke="#dedede" stroke-width="1"/>
<line x1="716.3" y1="150" x2="716.3" y2="545" stroke="#dedede" stroke-width="1"/>
<line x1="755.0" y1="150" x2="755.0" y2="545" stroke="#dedede" stroke-width="1"/>
<line x1="793.6" y1="150" x2="793.6" y2="545" stroke="#dedede" stroke-width="1"/>
<line x1="832.3" y1="150" x2="832.3" y2="545" stroke="#dedede" stroke-width="1"/>
<line x1="909.6" y1="150" x2="909.6" y2="545" stroke="#dedede" stroke-width="1"/>
<line x1="948.3" y1="150" x2="948.3" y2="545" stroke="#dedede" stroke-width="1"/>
<line x1="987.0" y1="150" x2="987.0" y2="545" stroke="#dedede" stroke-width="1"/>
<line x1="1025.6" y1="150" x2="1025.6" y2="545" stroke="#dedede" stroke-width="1"/>
<line x1="1102.9" y1="150" x2="1102.9" y2="545" stroke="#dedede" stroke-width="1"/>
<line x1="1141.6" y1="150" x2="1141.6" y2="545" stroke="#dedede" stroke-width="1"/>
<line x1="1180.3" y1="150" x2="1180.3" y2="545" stroke="#dedede" stroke-width="1"/>
<line x1="1218.9" y1="150" x2="1218.9" y2="545" stroke="#dedede" stroke-width="1"/>
<line x1="292" y1="531.8" x2="1257" y2="531.8" stroke="#e2e2e2" stroke-width="1"/>
<line x1="292" y1="518.6" x2="1257" y2="518.6" stroke="#e2e2e2" stroke-width="1"/>
<line x1="292" y1="505.4" x2="1257" y2="505.4" stroke="#e2e2e2" stroke-width="1"/>
<line x1="292" y1="492.3" x2="1257" y2="492.3" stroke="#e2e2e2" stroke-width="1"/>
<line x1="292" y1="465.9" x2="1257" y2="465.9" stroke="#e2e2e2" stroke-width="1"/>
<line x1="292" y1="452.7" x2="1257" y2="452.7" stroke="#e2e2e2" stroke-width="1"/>
<line x1="292" y1="439.5" x2="1257" y2="439.5" stroke="#e2e2e2" stroke-width="1"/>
<line x1="292" y1="426.3" x2="1257" y2="426.3" stroke="#e2e2e2" stroke-width="1"/>
<line x1="292" y1="399.9" x2="1257" y2="399.9" stroke="#e2e2e2" stroke-width="1"/>
<line x1="292" y1="386.8" x2="1257" y2="386.8" stroke="#e2e2e2" stroke-width="1"/>
<line x1="292" y1="373.6" x2="1257" y2="373.6" stroke="#e2e2e2" stroke-width="1"/>
<line x1="292" y1="360.4" x2="1257" y2="360.4" stroke="#e2e2e2" stroke-width="1"/>
<line x1="292" y1="334.0" x2="1257" y2="334.0" stroke="#e2e2e2" stroke-width="1"/>
<line x1="292" y1="320.8" x2="1257" y2="320.8" stroke="#e2e2e2" stroke-width="1"/>
<line x1="292" y1="307.6" x2="1257" y2="307.6" stroke="#e2e2e2" stroke-width="1"/>
<line x1="292" y1="294.5" x2="1257" y2="294.5" stroke="#e2e2e2" stroke-width="1"/>
<line x1="292" y1="268.1" x2="1257" y2="268.1" stroke="#e2e2e2" stroke-width="1"/>
<line x1="292" y1="254.9" x2="1257" y2="254.9" stroke="#e2e2e2" stroke-width="1"/>
<line x1="292" y1="241.7" x2="1257" y2="241.7" stroke="#e2e2e2" stroke-width="1"/>
<line x1="292" y1="228.5" x2="1257" y2="228.5" stroke="#e2e2e2" stroke-width="1"/>
<line x1="292" y1="202.1" x2="1257" y2="202.1" stroke="#e2e2e2" stroke-width="1"/>
<line x1="292" y1="189.0" x2="1257" y2="189.0" stroke="#e2e2e2" stroke-width="1"/>
<line x1="292" y1="175.8" x2="1257" y2="175.8" stroke="#e2e2e2" stroke-width="1"/>
<line x1="292" y1="162.6" x2="1257" y2="162.6" stroke="#e2e2e2" stroke-width="1"/>
<line x1="484.3" y1="150" x2="484.3" y2="545" stroke="#c4c4c4" stroke-width="1.5"/>
<line x1="677.6" y1="150" x2="677.6" y2="545" stroke="#c4c4c4" stroke-width="1.5"/>
<line x1="871.0" y1="150" x2="871.0" y2="545" stroke="#c4c4c4" stroke-width="1.5"/>
<line x1="1064.3" y1="150" x2="1064.3" y2="545" stroke="#c4c4c4" stroke-width="1.5"/>
<line x1="292" y1="479.1" x2="1257" y2="479.1" stroke="#bababa" stroke-width="1.3"/>
<line x1="292" y1="413.1" x2="1257" y2="413.1" stroke="#bababa" stroke-width="1.3"/>
<line x1="292" y1="347.2" x2="1257" y2="347.2" stroke="#bababa" stroke-width="1.3"/>
<line x1="292" y1="281.3" x2="1257" y2="281.3" stroke="#bababa" stroke-width="1.3"/>
<line x1="292" y1="215.3" x2="1257" y2="215.3" stroke="#bababa" stroke-width="1.3"/>
<line x1="275.5" y1="545.0" x2="291" y2="545.0" stroke="#222" stroke-width="1.4"/>
<line x1="283" y1="531.8" x2="291" y2="531.8" stroke="#222" stroke-width="1.4"/>
<line x1="283" y1="518.6" x2="291" y2="518.6" stroke="#222" stroke-width="1.4"/>
<line x1="283" y1="505.4" x2="291" y2="505.4" stroke="#222" stroke-width="1.4"/>
<line x1="283" y1="492.3" x2="291" y2="492.3" stroke="#222" stroke-width="1.4"/>
<line x1="275.5" y1="479.1" x2="291" y2="479.1" stroke="#222" stroke-width="1.4"/>
<line x1="283" y1="465.9" x2="291" y2="465.9" stroke="#222" stroke-width="1.4"/>
<line x1="283" y1="452.7" x2="291" y2="452.7" stroke="#222" stroke-width="1.4"/>
<line x1="283" y1="439.5" x2="291" y2="439.5" stroke="#222" stroke-width="1.4"/>
<line x1="283" y1="426.3" x2="291" y2="426.3" stroke="#222" stroke-width="1.4"/>
<line x1="275.5" y1="413.1" x2="291" y2="413.1" stroke="#222" stroke-width="1.4"/>
<line x1="283" y1="399.9" x2="291" y2="399.9" stroke="#222" stroke-width="1.4"/>
<line x1="283" y1="386.8" x2="291" y2="386.8" stroke="#222" stroke-width="1.4"/>
<line x1="283" y1="373.6" x2="291" y2="373.6" stroke="#222" stroke-width="1.4"/>
<line x1="283" y1="360.4" x2="291" y2="360.4" stroke="#222" stroke-width="1.4"/>
<line x1="275.5" y1="347.2" x2="291" y2="347.2" stroke="#222" stroke-width="1.4"/>
<line x1="283" y1="334.0" x2="291" y2="334.0" stroke="#222" stroke-width="1.4"/>
<line x1="283" y1="320.8" x2="291" y2="320.8" stroke="#222" stroke-width="1.4"/>
<line x1="283" y1="307.6" x2="291" y2="307.6" stroke="#222" stroke-width="1.4"/>
<line x1="283" y1="294.5" x2="291" y2="294.5" stroke="#222" stroke-width="1.4"/>
<line x1="275.5" y1="281.3" x2="291" y2="281.3" stroke="#222" stroke-width="1.4"/>
<line x1="283" y1="268.1" x2="291" y2="268.1" stroke="#222" stroke-width="1.4"/>
<line x1="283" y1="254.9" x2="291" y2="254.9" stroke="#222" stroke-width="1.4"/>
<line x1="283" y1="241.7" x2="291" y2="241.7" stroke="#222" stroke-width="1.4"/>
<line x1="283" y1="228.5" x2="291" y2="228.5" stroke="#222" stroke-width="1.4"/>
<line x1="275.5" y1="215.3" x2="291" y2="215.3" stroke="#222" stroke-width="1.4"/>
<line x1="283" y1="202.1" x2="291" y2="202.1" stroke="#222" stroke-width="1.4"/>
<line x1="283" y1="189.0" x2="291" y2="189.0" stroke="#222" stroke-width="1.4"/>
<line x1="283" y1="175.8" x2="291" y2="175.8" stroke="#222" stroke-width="1.4"/>
<line x1="283" y1="162.6" x2="291" y2="162.6" stroke="#222" stroke-width="1.4"/>
<line x1="275.5" y1="149.4" x2="291" y2="149.4" stroke="#222" stroke-width="1.4"/>
<line x1="291.0" y1="545" x2="291.0" y2="550.8" stroke="#222" stroke-width="1.4"/>
<line x1="329.7" y1="545" x2="329.7" y2="548.2" stroke="#222" stroke-width="1.4"/>
<line x1="368.3" y1="545" x2="368.3" y2="548.2" stroke="#222" stroke-width="1.4"/>
<line x1="407.0" y1="545" x2="407.0" y2="548.2" stroke="#222" stroke-width="1.4"/>
<line x1="445.7" y1="545" x2="445.7" y2="548.2" stroke="#222" stroke-width="1.4"/>
<line x1="484.3" y1="545" x2="484.3" y2="550.8" stroke="#222" stroke-width="1.4"/>
<line x1="523.0" y1="545" x2="523.0" y2="548.2" stroke="#222" stroke-width="1.4"/>
<line x1="561.6" y1="545" x2="561.6" y2="548.2" stroke="#222" stroke-width="1.4"/>
<line x1="600.3" y1="545" x2="600.3" y2="548.2" stroke="#222" stroke-width="1.4"/>
<line x1="639.0" y1="545" x2="639.0" y2="548.2" stroke="#222" stroke-width="1.4"/>
<line x1="677.6" y1="545" x2="677.6" y2="550.8" stroke="#222" stroke-width="1.4"/>
<line x1="716.3" y1="545" x2="716.3" y2="548.2" stroke="#222" stroke-width="1.4"/>
<line x1="755.0" y1="545" x2="755.0" y2="548.2" stroke="#222" stroke-width="1.4"/>
<line x1="793.6" y1="545" x2="793.6" y2="548.2" stroke="#222" stroke-width="1.4"/>
<line x1="832.3" y1="545" x2="832.3" y2="548.2" stroke="#222" stroke-width="1.4"/>
<line x1="871.0" y1="545" x2="871.0" y2="550.8" stroke="#222" stroke-width="1.4"/>
<line x1="909.6" y1="545" x2="909.6" y2="548.2" stroke="#222" stroke-width="1.4"/>
<line x1="948.3" y1="545" x2="948.3" y2="548.2" stroke="#222" stroke-width="1.4"/>
<line x1="987.0" y1="545" x2="987.0" y2="548.2" stroke="#222" stroke-width="1.4"/>
<line x1="1025.6" y1="545" x2="1025.6" y2="548.2" stroke="#222" stroke-width="1.4"/>
<line x1="1064.3" y1="545" x2="1064.3" y2="550.8" stroke="#222" stroke-width="1.4"/>
<line x1="1102.9" y1="545" x2="1102.9" y2="548.2" stroke="#222" stroke-width="1.4"/>
<line x1="1141.6" y1="545" x2="1141.6" y2="548.2" stroke="#222" stroke-width="1.4"/>
<line x1="1180.3" y1="545" x2="1180.3" y2="548.2" stroke="#222" stroke-width="1.4"/>
<line x1="1218.9" y1="545" x2="1218.9" y2="548.2" stroke="#222" stroke-width="1.4"/>
<line x1="1257.6" y1="545" x2="1257.6" y2="550.8" stroke="#222" stroke-width="1.4"/>
<line x1="275.5" y1="149.4" x2="1258" y2="149.4" stroke="#111" stroke-width="1.4"/>
<line x1="290.9" y1="149" x2="290.9" y2="546" stroke="#333" stroke-width="1.8"/>
<line x1="1257.9" y1="149" x2="1257.9" y2="546" stroke="#6e6e6e" stroke-width="2"/>
<line x1="290" y1="545" x2="1259" y2="545" stroke="#333" stroke-width="1.6"/>
<text x="268.5" y="549.2" text-anchor="end" font-size="12" fill="#222">1.00</text>
<text x="268.5" y="483.3" text-anchor="end" font-size="12" fill="#222">1.20</text>
<text x="268.5" y="417.3" text-anchor="end" font-size="12" fill="#222">1.40</text>
<text x="268.5" y="351.4" text-anchor="end" font-size="12" fill="#222">1.60</text>
<text x="268.5" y="285.5" text-anchor="end" font-size="12" fill="#222">1.80</text>
<text x="268.5" y="219.5" text-anchor="end" font-size="12" fill="#222">2.00</text>
<text x="268.5" y="153.6" text-anchor="end" font-size="12" fill="#222">2.20</text>
<text x="289.7" y="561" text-anchor="middle" font-size="12" fill="#222">1.80</text>
<text x="483.0" y="561" text-anchor="middle" font-size="12" fill="#222">1.90</text>
<text x="676.3" y="561" text-anchor="middle" font-size="12" fill="#222">2.00</text>
<text x="869.7" y="561" text-anchor="middle" font-size="12" fill="#222">2.10</text>
<text x="1063.0" y="561" text-anchor="middle" font-size="12" fill="#222">2.20</text>
<text x="1256.3" y="561" text-anchor="middle" font-size="12" fill="#222">2.30</text>
<text x="774" y="572" text-anchor="middle" font-size="11.5" fill="#222">Freq [GHz]</text>
<text transform="translate(244.8,349) rotate(-90)" text-anchor="middle" font-size="11.5" fill="#222">VSWR(1)</text>
<text x="749.5" y="141.5" text-anchor="middle" font-size="17.5" fill="#111" stroke="#111" stroke-width=".25">XY Plot 1</text>
<text x="1197.5" y="140" text-anchor="middle" font-size="13" fill="#222" textLength="78" lengthAdjust="spacingAndGlyphs">HFSSDesign4</text>
<path d="M291.00,176.70 L387.66,347.00" fill="none" stroke="#b81a2c" stroke-width="2.9" stroke-dasharray="4.599 4.024" stroke-dashoffset="0.000"/>
<path d="M387.66,347.00 L484.32,459.00" fill="none" stroke="#b81a2c" stroke-width="2.9" stroke-dasharray="5.284 4.623" stroke-dashoffset="7.001"/>
<path d="M484.32,459.00 L580.98,518.50" fill="none" stroke="#b81a2c" stroke-width="2.9" stroke-dasharray="4.697 4.110" stroke-dashoffset="5.637"/>
<path d="M580.98,518.50 L677.64,514.20" fill="none" stroke="#b81a2c" stroke-width="2.9" stroke-dasharray="4.004 3.503" stroke-dashoffset="3.964"/>
<path d="M677.64,514.20 L774.30,504.50" fill="none" stroke="#b81a2c" stroke-width="2.9" stroke-dasharray="4.020 3.518" stroke-dashoffset="3.136"/>
<path d="M774.30,504.50 L870.96,512.20" fill="none" stroke="#b81a2c" stroke-width="2.9" stroke-dasharray="4.013 3.511" stroke-dashoffset="2.287"/>
<path d="M870.96,512.20 L967.62,522.40" fill="none" stroke="#b81a2c" stroke-width="2.9" stroke-dasharray="4.022 3.519" stroke-dashoffset="1.448"/>
<path d="M967.62,522.40 L1064.28,484.60" fill="none" stroke="#b81a2c" stroke-width="2.9" stroke-dasharray="4.295 3.758" stroke-dashoffset="0.644"/>
<path d="M1064.28,484.60 L1160.94,392.50" fill="none" stroke="#b81a2c" stroke-width="2.9" stroke-dasharray="5.525 4.834" stroke-dashoffset="10.028"/>
<path d="M1160.94,392.50 L1257.60,263.30" fill="none" stroke="#b81a2c" stroke-width="2.9" stroke-dasharray="4.996 4.371" stroke-dashoffset="8.018"/>
<rect x="1187" y="153" width="81" height="44" fill="#c4c4c4"/>
<rect x="1181" y="148" width="80.5" height="44.5" fill="#fff" stroke="#111" stroke-width="1.2"/>
<line x1="1182" y1="164.5" x2="1261" y2="164.5" stroke="#9aa" stroke-width="1"/>
<text x="1221" y="160.5" text-anchor="middle" font-size="11" fill="#222">Curve Info</text>
<line x1="1184" y1="173.5" x2="1204" y2="173.5" stroke="#c8283a" stroke-width="2.2" stroke-dasharray="4 3"/>
<text x="1258.5" y="177" text-anchor="end" font-size="11" fill="#222" textLength="43" lengthAdjust="spacingAndGlyphs">VSWR(1)</text>
<text x="1184.5" y="189" font-size="11" fill="#222" textLength="72" lengthAdjust="spacingAndGlyphs">Setup1 : Sweep</text>
<path d="M1258,128.5 L1262.8,136.5 L1253.3,136.5 Z" fill="#b8525c"/>
<text x="1259" y="142.5" text-anchor="middle" font-size="5" font-weight="bold" fill="#334">ANSOFT</text>
</svg>

<!-- message area -->
<div class="a" style="left:0;top:577px;width:1280px;height:6px;background:#f0f0f0"></div>
<div class="a" style="left:0;top:582px;width:1280px;height:2px;background:#9a9a9a"></div>
<div class="a" style="left:4px;top:587px;width:11px;height:73px;background:#f4f4f4;border:1px solid #9a9a9a;border-radius:2px"></div>
<svg class="a" style="left:6px;top:590px" width="8" height="8"><path d="M1.5 1.5 L6.5 6.5 M6.5 1.5 L1.5 6.5" stroke="#111" stroke-width="1.5"/></svg>
<svg class="a" style="left:7px;top:603px" width="6" height="6"><path d="M1 3 L5 .5 L5 5.5Z" fill="#222"/></svg>
<div class="a" style="left:4px;top:612px;width:11px;height:46px;overflow:hidden"><div class="a" style="left:1px;top:44.5px;font-size:10px;line-height:12px;color:#2a2a2a;white-space:nowrap;transform:rotate(-90deg) scaleX(.86);transform-origin:0 0">Message Manager</div></div>
<div class="a" style="left:17px;top:587px;width:621px;height:72px;background:#fff;border:1px solid #8a8a8a;border-top:2px solid #8a8a8a"></div>
<div class="a" style="left:64px;top:589px;width:1px;height:69px;background:#e4e4e4"></div>
<div class="msg" style="left:111px;top:590.0px">The trace 'dB(DirTotal)' refers to a solution that has been either deleted or is no longer applicable for trace's report</div>
<div class="msg" style="left:111px;top:602.5px">type. The trace has been deleted as a result.&#160; (3:33:04&#160; фев 01, 2015)</div>
<div class="msg" style="left:111px;top:616.0px">The trace 'dB(GainTotal)' refers to a solution that has been either deleted or is no longer applicable for trace's</div>
<div class="msg" style="left:111px;top:628.5px">report type. The trace has been deleted as a result.&#160; (3:33:04&#160; фев 01, 2015)</div>
<div class="msg" style="left:111px;top:642.0px">The report 'XY Plot 3' was deleted because its traces were invalidated due to the edit.&#160; (3:33:04&#160; фев 01, 2015)</div>
<svg class="a" style="left:89px;top:595.5px" width="16" height="13" viewBox="0 0 16 13"><defs><linearGradient id="wg596" x1="0" y1="0" x2="0" y2="1"><stop offset="0" stop-color="#f4e070"/><stop offset="1" stop-color="#c8a020"/></linearGradient></defs><path d="M8 .8 L15.4 12.4 H.6Z" fill="url(#wg596)" stroke="#7a6a20" stroke-width=".9"/><path d="M8 4v4.6" stroke="#222" stroke-width="1.8"/><rect x="7.1" y="9.6" width="1.8" height="1.7" fill="#222"/></svg>
<svg class="a" style="left:89px;top:622.5px" width="16" height="13" viewBox="0 0 16 13"><defs><linearGradient id="wg622" x1="0" y1="0" x2="0" y2="1"><stop offset="0" stop-color="#f4e070"/><stop offset="1" stop-color="#c8a020"/></linearGradient></defs><path d="M8 .8 L15.4 12.4 H.6Z" fill="url(#wg622)" stroke="#7a6a20" stroke-width=".9"/><path d="M8 4v4.6" stroke="#222" stroke-width="1.8"/><rect x="7.1" y="9.6" width="1.8" height="1.7" fill="#222"/></svg>
<svg class="a" style="left:89px;top:643px" width="16" height="13" viewBox="0 0 16 13"><defs><linearGradient id="wg643" x1="0" y1="0" x2="0" y2="1"><stop offset="0" stop-color="#f4e070"/><stop offset="1" stop-color="#c8a020"/></linearGradient></defs><path d="M8 .8 L15.4 12.4 H.6Z" fill="url(#wg643)" stroke="#7a6a20" stroke-width=".9"/><path d="M8 4v4.6" stroke="#222" stroke-width="1.8"/><rect x="7.1" y="9.6" width="1.8" height="1.7" fill="#222"/></svg>
<div class="a" style="left:64px;top:602px;width:11px;height:1px;background:#c4c4c4"></div>
<div class="a" style="left:64px;top:628px;width:11px;height:1px;background:#c4c4c4"></div>
<div class="a" style="left:64px;top:649px;width:11px;height:1px;background:#c4c4c4"></div>
<!-- v scrollbar -->
<div class="a" style="left:621px;top:589px;width:16px;height:69px;background:#f0f0f0"></div>
<div class="a" style="left:621px;top:589px;width:15px;height:14px;background:#f4f4f4;border-bottom:2px solid #a8a8a8"></div>
<svg class="a" style="left:625px;top:593px" width="8" height="6"><path d="M.5 5 L4 1 L7.5 5Z" fill="#111"/></svg>
<div class="a" style="left:621px;top:628px;width:15px;height:10px;background:#e6e6e6;border-bottom:2px solid #a0a0a0"></div>
<svg class="a" style="left:625px;top:649px" width="8" height="6"><path d="M.5 1 L4 5 L7.5 1Z" fill="#111"/></svg>
<div class="a" style="left:644px;top:584px;width:2px;height:78px;background:#9a9a9a"></div>
<div class="a" style="left:648px;top:587px;width:13px;height:73px;background:#f4f4f4;border:1px solid #9a9a9a;border-radius:2px"></div>
<svg class="a" style="left:651px;top:590px" width="8" height="8"><path d="M1.5 1.5 L6.5 6.5 M6.5 1.5 L1.5 6.5" stroke="#111" stroke-width="1.5"/></svg>
<svg class="a" style="left:652px;top:603px" width="6" height="6"><path d="M1 3 L5 .5 L5 5.5Z" fill="#222"/></svg>
<div class="a" style="left:649px;top:656.5px;font-size:10px;line-height:12px;color:#2a2a2a;white-space:nowrap;transform:rotate(-90deg) scaleX(.86);transform-origin:0 0">Progress</div>
<div class="a" style="left:663px;top:587px;width:617px;height:72px;background:#fff;border:1px solid #8a8a8a;border-top:2px solid #8a8a8a;border-right:none"></div>

<!-- status bar -->
<div class="a" style="left:0;top:662px;width:1280px;height:21px;background:#f0f0f0;border-top:1px solid #dadada"></div>
<div class="a" style="left:2px;top:668px;font-size:12px;line-height:14px;color:#111;transform:scaleX(.89);transform-origin:0 50%">1 objects are selected</div>
<div class="a" style="left:1082px;top:665px;width:40px;height:17px;border:1px solid #a0a0a0;border-right-color:#fff;border-bottom-color:#fff;background:#f4f4f4"></div>
<div class="a" style="left:1086px;top:667px;font-size:12px;color:#222">X</div>
<div class="a" style="left:1119px;top:665px;width:62px;height:17px;border:1px solid #a0a0a0;border-right-color:#fff;border-bottom-color:#fff;background:#f0f0f0"></div>
<div class="a" style="left:1123px;top:667px;font-size:11px;color:#555">1.9672</div>
<div class="a" style="left:1181px;top:665px;width:38px;height:17px;border:1px solid #a0a0a0;border-right-color:#fff;border-bottom-color:#fff;background:#f4f4f4"></div>
<div class="a" style="left:1184px;top:667px;font-size:12px;color:#222">Y1</div>
<div class="a" style="left:1218px;top:665px;width:62px;height:17px;border:1px solid #a0a0a0;border-right-color:#fff;border-bottom-color:#fff;background:#f0f0f0"></div>
<div class="a" style="left:1222px;top:667px;font-size:11px;color:#555">1.7024</div>

<!-- taskbar -->
<div class="a" style="left:0;top:683px;width:1280px;height:37px;background:linear-gradient(90deg,#8fb0d4 0%,#a7c3e0 8%,#b6d0ea 25%,#aac6e4 45%,#bcd4ec 60%,#a9c4e2 80%,#b4cde8 100%)"></div>
<div class="a" style="left:0;top:683px;width:1280px;height:1px;background:#7a92aa"></div>
<div class="a" style="left:0;top:684px;width:1280px;height:1px;background:#d0e0f0"></div>
<div class="a" style="left:0;top:685px;width:60px;height:35px;background:linear-gradient(90deg,#86a2c0,#9ab6d4 70%,rgba(160,190,220,0))"></div>
<div class="a" style="left:1000px;top:685px;width:280px;height:35px;background:linear-gradient(90deg,rgba(150,180,210,0),#8fa9c6 22%,#8aa3c0 100%)"></div>
<svg class="a" style="left:7px;top:684px" width="38" height="36" viewBox="0 0 38 36"><defs><radialGradient id="orb" cx="50%" cy="45%" r="55%"><stop offset="0" stop-color="#3a7ac8"/><stop offset=".75" stop-color="#123e80"/><stop offset="1" stop-color="#0c2a5a"/></radialGradient><radialGradient id="orb2" cx="50%" cy="100%" r="50%"><stop offset="0" stop-color="#40e0ff" stop-opacity=".9"/><stop offset="1" stop-color="#40e0ff" stop-opacity="0"/></radialGradient></defs><circle cx="18" cy="17.5" r="16.8" fill="#a8c0d8" opacity=".7"/><circle cx="18" cy="17.5" r="15.6" fill="url(#orb)" stroke="#284a70" stroke-width=".8"/><ellipse cx="18" cy="28" rx="12" ry="7" fill="url(#orb2)"/><path d="M9 10 Q13 7 18 9.5 L17 17 Q13 14.5 8 16.5Z" fill="#f0602a"/><path d="M19 9.5 Q23 12 28 9.5 L27 17.5 Q23 19.5 18.5 17Z" fill="#8ac840"/><path d="M8 17.5 Q13 15.5 17 18 L16 25 Q12 22.5 7 24.5Z" fill="#30a8e8"/><path d="M18 18 Q22 20.5 27 18.5 L26 25.5 Q22 27.5 17 25Z" fill="#f8c828"/><ellipse cx="18" cy="8" rx="10" ry="5" fill="#fff" opacity=".28"/></svg>
<svg class="a" style="left:68px;top:688px" width="31" height="28" viewBox="0 0 31 28"><path d="M1 4 H12 L14 2 H29 V26 H1Z" fill="#f4d888" stroke="#c8a050"/><rect x="3" y="4" width="24" height="6" fill="#fff3c8"/><circle cx="6" cy="5" r="1.2" fill="#40a040"/><circle cx="13" cy="5" r="1.2" fill="#d04040"/><path d="M1 12 H29 V26 H1Z" fill="#f8e6a8"/><path d="M5 18 H25 V27 H21 V22 H9 V27 H5Z" fill="#70a8d8"/></svg>
<svg class="a" style="left:126px;top:688px" width="31" height="28" viewBox="0 0 31 28"><path d="M1 1 H22 L30 14 L22 27 H1Z" fill="#3a78b8"/><path d="M1 1 H22 L30 14 H1Z" fill="#5a98d0"/><path d="M4 10 H9 L15 5 V23 L9 18 H4Z" fill="#fff"/><path d="M18 8 Q22 14 18 20 M20 5 Q26 14 20 23" stroke="#fff" stroke-width="2" fill="none"/></svg>
<svg class="a" style="left:185px;top:689px" width="27" height="27" viewBox="0 0 27 27"><rect x="6" y="2" width="19" height="22" fill="#b8d8f0" stroke="#5a90c0"/><rect x="3" y="4" width="19" height="22" fill="#d8ecfa" stroke="#5a90c0"/><circle cx="12" cy="15" r="8" fill="#f07a20"/><path d="M9 10 L17 15 L9 20Z" fill="#fff"/></svg>
<div class="a" style="left:230px;top:684px;width:55px;height:36px;border:1px solid #6d86a0;border-radius:3px;background:linear-gradient(rgba(255,255,255,.72),rgba(255,255,255,.5) 50%,rgba(255,255,255,.38) 51%,rgba(255,255,255,.45));box-shadow:inset 0 0 0 1px rgba(255,255,255,.6)"></div>
<div class="a" style="left:288px;top:684px;width:55px;height:36px;border:1px solid #6d86a0;border-radius:3px;background:linear-gradient(rgba(255,255,255,.72),rgba(255,255,255,.5) 50%,rgba(255,255,255,.38) 51%,rgba(255,255,255,.45));box-shadow:inset 0 0 0 1px rgba(255,255,255,.6)"></div>
<div class="a" style="left:346px;top:684px;width:49px;height:36px;border:1px solid #6d86a0;border-radius:3px;background:linear-gradient(rgba(255,255,255,.72),rgba(255,255,255,.5) 50%,rgba(255,255,255,.38) 51%,rgba(255,255,255,.45));box-shadow:inset 0 0 0 1px rgba(255,255,255,.6)"></div>
<div class="a" style="left:404px;top:684px;width:55px;height:36px;border:1px solid #6d86a0;border-radius:3px;background:linear-gradient(rgba(255,255,255,.72),rgba(255,255,255,.5) 50%,rgba(255,255,255,.38) 51%,rgba(255,255,255,.45));box-shadow:inset 0 0 0 1px rgba(255,255,255,.6)"></div>
<div class="a" style="left:463px;top:684px;width:55px;height:36px;border:1px solid #6d86a0;border-radius:3px;background:linear-gradient(rgba(255,255,255,.72),rgba(255,255,255,.5) 50%,rgba(255,255,255,.38) 51%,rgba(255,255,255,.45));box-shadow:inset 0 0 0 1px rgba(255,255,255,.6)"></div>
<div class="a" style="left:521px;top:684px;width:55px;height:36px;border:1px solid #6d86a0;border-radius:3px;background:linear-gradient(rgba(255,255,255,.72),rgba(255,255,255,.5) 50%,rgba(255,255,255,.38) 51%,rgba(255,255,255,.45));box-shadow:inset 0 0 0 1px rgba(255,255,255,.6)"></div>
<div class="a" style="left:579px;top:684px;width:55px;height:36px;border:1px solid #6d86a0;border-radius:3px;background:linear-gradient(rgba(255,255,255,.72),rgba(255,255,255,.5) 50%,rgba(255,255,255,.38) 51%,rgba(255,255,255,.45));box-shadow:inset 0 0 0 1px rgba(255,255,255,.6)"></div>
<svg class="a" style="left:243px;top:687px" width="30" height="31" viewBox="0 0 30 31"><ellipse cx="15" cy="15.5" rx="13" ry="14" fill="#e01818"/><ellipse cx="15" cy="15.5" rx="5.5" ry="10" fill="#f4e4e4"/><ellipse cx="15" cy="15.5" rx="4" ry="9" fill="#fff"/></svg>
<svg class="a" style="left:300px;top:688px" width="31" height="28" viewBox="0 0 31 28"><path d="M1 1 H22 L30 14 L22 27 H1Z" fill="#3a82c8"/><rect x="5" y="7" width="17" height="13" fill="#fff"/><path d="M5 7 L13.5 14 L22 7" stroke="#6aa0d0" fill="none"/></svg>
<svg class="a" style="left:355px;top:686px" width="30" height="30" viewBox="0 0 30 30"><rect x="0" y="1" width="30" height="28" fill="#e4d0dc" opacity=".75"/><path d="M6 4 Q4 9 12 9 Q22 9 24 15 Q22 20 12 21 Q6 22 10 26 L25 27" stroke="#f0c090" stroke-width="5" fill="none" opacity=".7"/><path d="M6 4 Q4 9 12 9 Q22 9 24 15 Q22 20 12 21 Q6 22 10 26 L25 27" stroke="#a0d0a0" stroke-width="2" fill="none" opacity=".7"/><path d="M6 3 Q3 10 13 10 Q23 11 23 15 Q21 19 11 20 M9 27 Q14 25 25 27 M9 9 Q6 15 14 15" stroke="#2a2a50" stroke-width="1.5" fill="none"/></svg>
<div class="a" style="left:395px;top:685px;width:1px;height:35px;background:#7a92ac"></div><div class="a" style="left:401px;top:685px;width:1px;height:35px;background:#7a92ac"></div>
<svg class="a" style="left:418px;top:688px" width="28" height="29" viewBox="0 0 28 29"><rect x="1" y="1" width="26" height="27" rx="2.5" fill="#1a3cc0"/><rect x="7" y="1" width="14" height="9" fill="#e8ecf8"/><rect x="16" y="2" width="3" height="6" fill="#1a3cc0"/><rect x="4" y="12" width="20" height="14" fill="#fff"/><path d="M5 15h18M5 18.5h18M5 22h18" stroke="#c87060" stroke-width="1.3"/></svg>
<svg class="a" style="left:475px;top:688px" width="31" height="28" viewBox="0 0 31 28"><path d="M15.5 2 L30 26 H1Z" fill="#f0c818" stroke="#a08010" stroke-width="1"/><rect x="14" y="9" width="3.2" height="10" fill="#111"/><rect x="14" y="21" width="3.2" height="3" fill="#111"/></svg>
<svg class="a" style="left:533px;top:687px" width="30" height="30" viewBox="0 0 30 30"><defs><radialGradient id="ans" cx="30%" cy="30%" r="70%"><stop offset="0" stop-color="#b070e0"/><stop offset=".6" stop-color="#6a18a8"/><stop offset="1" stop-color="#3a0870"/></radialGradient></defs><circle cx="15" cy="15" r="14.5" fill="url(#ans)"/><path d="M5 22 L15 3 L20 4 L10 22Z" fill="#f8d0b8"/><path d="M11 22 L18 9 L21 11 L15 22Z" fill="#f0a890"/><path d="M17 22 L21 14 L25 22Z" fill="#f8d0c0"/><rect x="3" y="21" width="23" height="2" fill="#f0e0e8" opacity=".6"/></svg>
<svg class="a" style="left:591px;top:688px" width="31" height="29" viewBox="0 0 31 29"><ellipse cx="14" cy="16" rx="12" ry="10" fill="#e8e0d0" stroke="#a09070"/><circle cx="8" cy="14" r="2" fill="#e04040"/><circle cx="12" cy="10" r="2" fill="#40a040"/><circle cx="18" cy="10" r="2" fill="#4060e0"/><circle cx="9" cy="20" r="2" fill="#f0c020"/><path d="M14 22 L28 3" stroke="#c89a40" stroke-width="2.5"/><path d="M26 2 L29 1 L28 5Z" fill="#807060"/></svg>
<div class="a" style="left:1058px;top:692px;font-size:12px;color:#e8f0f8;transform:scaleX(.9);transform-origin:0 50%">RU</div>
<svg class="a" style="left:1085px;top:699px" width="10" height="6"><path d="M1 5 L5 1 L9 5Z" fill="#eef"/></svg>
<svg class="a" style="left:1106px;top:694px" width="14" height="16" viewBox="0 0 14 16"><rect x="1" y="3" width="9" height="12" fill="#fff" stroke="#333"/><rect x="7" y="1" width="6" height="8" fill="#ddd" stroke="#222"/><path d="M9 1v-1M11 1v-1" stroke="#222"/></svg>
<svg class="a" style="left:1128px;top:694px" width="16" height="16" viewBox="0 0 16 16"><rect x="4" y="4" width="11" height="9" fill="#707a88" stroke="#eee"/><path d="M1 1v14M1 3h4" stroke="#fff" stroke-width="1.5"/><rect x="6" y="14" width="6" height="2" fill="#eee"/></svg>
<svg class="a" style="left:1152px;top:694px" width="16" height="16" viewBox="0 0 16 16"><path d="M2 1v15" stroke="#fff" stroke-width="1.5"/><path d="M3 2h8l-2 3 2 3H3z" fill="#fff"/><circle cx="11" cy="11" r="4.5" fill="#e02020"/><path d="M9 9l4 4M13 9l-4 4" stroke="#fff" stroke-width="1.3"/></svg>
<svg class="a" style="left:1173px;top:695px" width="16" height="14" viewBox="0 0 16 14"><path d="M1 5h3l4-4v12l-4-4H1z" fill="#f0f0f0" stroke="#666" stroke-width=".6"/><path d="M10 4q2 3 0 6M12 2q4 5 0 10" stroke="#eee" stroke-width="1.2" fill="none"/></svg>
<div class="a" style="left:1217px;top:687px;font-size:12px;line-height:14px;color:#f4f8fc;transform:scaleX(.92);transform-origin:0 50%">15:38</div>
<div class="a" style="left:1205px;top:703px;font-size:12px;line-height:14px;color:#f4f8fc;transform:scaleX(.85);transform-origin:0 50%">01.02.2015</div>
<div class="a" style="left:1267px;top:685px;width:13px;height:35px;background:linear-gradient(90deg,#8aa0ba,#aac0d8);border-left:1px solid #6a809a"></div>
</body></html>
